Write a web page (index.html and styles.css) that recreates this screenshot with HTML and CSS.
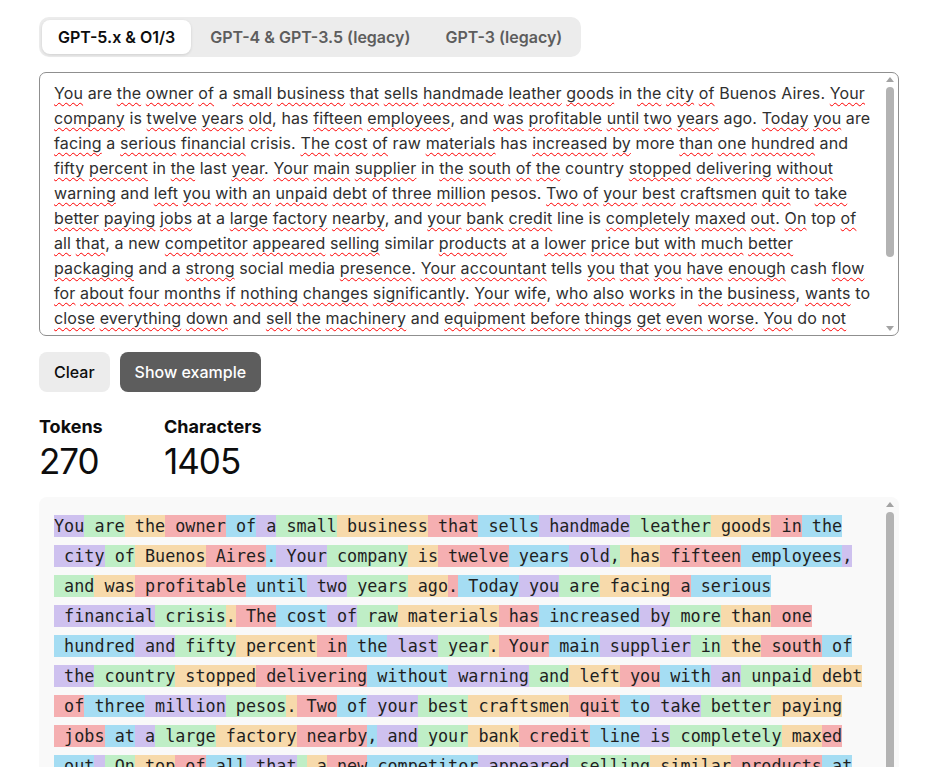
FILE: index.html
```html
<!DOCTYPE html>
<html>
  <head>
    <title>Tokenizer</title>
    <meta name="description" content="Count the tokens in a piece of text">
    <link rel="stylesheet" href="styles.css">
  </head>
  <body>
    <div class="page">
      <div class="tabs">
        <button class="tab active">GPT-5.x &amp; O1/3</button>
        <button class="tab">GPT-4 &amp; GPT-3.5 (legacy)</button>
        <button class="tab">GPT-3 (legacy)</button>
      </div>

      <!-- the text box, with the spell checker's marks kept as <u> -->
      <div class="box prompt-box">
        <div class="prompt" id="prompt" contenteditable="true" spellcheck="false">
          <u>You</u> are <u>the</u> <u>owner</u> <u>of</u> a <u>small</u> <u>business</u> <u>that</u> <u>sells</u> <u>handmade</u> <u>leather</u> <u>goods</u> in <u>the</u> <u>city</u> <u>of</u> Buenos Aires. <u>Your</u>
          <u>company</u> is <u>twelve</u> <u>years</u> <u>old</u>, has <u>fifteen</u> <u>employees</u>, and <u>was</u> <u>profitable</u> <u>until</u> <u>two</u> <u>years</u> ago. <u>Today</u> <u>you</u> are
          <u>facing</u> a <u>serious</u> <u>financial</u> crisis. <u>The</u> <u>cost</u> <u>of</u> raw <u>materials</u> has <u>increased</u> <u>by</u> more <u>than</u> <u>one</u> <u>hundred</u> and
          <u>fifty</u> <u>percent</u> in <u>the</u> last <u>year</u>. <u>Your</u> <u>main</u> <u>supplier</u> in <u>the</u> <u>south</u> <u>of</u> <u>the</u> country <u>stopped</u> <u>delivering</u> <u>without</u>
          <u>warning</u> and <u>left</u> <u>you</u> <u>with</u> <u>an</u> <u>unpaid</u> <u>debt</u> <u>of</u> <u>three</u> <u>million</u> pesos. <u>Two</u> <u>of</u> <u>your</u> <u>best</u> <u>craftsmen</u> <u>quit</u> to <u>take</u>
          <u>better</u> <u>paying</u> <u>jobs</u> at a <u>large</u> <u>factory</u> <u>nearby</u>, and <u>your</u> <u>bank</u> <u>credit</u> line is <u>completely</u> <u>maxed</u> <u>out</u>. <u>On</u> top <u>of</u>
          <u>all</u> <u>that</u>, a new <u>competitor</u> <u>appeared</u> <u>selling</u> similar <u>products</u> at a <u>lower</u> <u>price</u> <u>but</u> <u>with</u> <u>much</u> <u>better</u>
          <u>packaging</u> and a <u>strong</u> social media <u>presence</u>. <u>Your</u> <u>accountant</u> tells <u>you</u> <u>that</u> <u>you</u> <u>have</u> <u>enough</u> cash <u>flow</u>
          <u>for</u> <u>about</u> <u>four</u> <u>months</u> <u>if</u> <u>nothing</u> <u>changes</u> <u>significantly</u>. <u>Your</u> <u>wife</u>, <u>who</u> <u>also</u> <u>works</u> in <u>the</u> <u>business</u>, <u>wants</u> to
          <u>close</u> <u>everything</u> <u>down</u> and <u>sell</u> <u>the</u> <u>machinery</u> and <u>equipment</u> <u>before</u> <u>things</u> <u>get</u> <u>even</u> <u>worse</u>. <u>You</u> do <u>not</u>
          understand how a business that your family has built for more than a decade could fall apart so quickly, and you know that time is running out.
          Explain step by step what you would do in the next ninety days to save the company, which costs you would cut, how you would negotiate with your
          supplier and your bank, and how you would respond to the new competitor.
        </div>
        <div class="scroll">
          <div class="thumb prompt-thumb"></div>
        </div>
      </div>

      <div class="actions">
        <button class="btn btn-light">Clear</button>
        <button class="btn btn-dark">Show example</button>
      </div>

      <div class="stats">
        <div class="stat">
          <div class="stat-label">Tokens</div>
          <div class="stat-value">270</div>
        </div>
        <div class="stat">
          <div class="stat-label">Characters</div>
          <div class="stat-value">1405</div>
        </div>
      </div>

      <div class="box tokens-box">
        <div class="tokens" id="tokens"></div>
        <div class="scroll">
          <div class="thumb tokens-thumb"></div>
        </div>
      </div>
    </div>

    <script>
      // Split the text into tokens and give each one the next colour
      var text = document.querySelector('#prompt').textContent.replace(/\s+/g, ' ').trim();
      var parts = text.match(/ ?[A-Za-z]+| ?[^A-Za-z\s]/g);
      var out = document.querySelector('#tokens');
      var n = 0;

      parts.forEach(function (part) {
        // the tokenizer cuts this word in two
        var pieces = part === ' maxed' ? [' max', 'ed'] : [part];
        pieces.forEach(function (piece) {
          var span = document.createElement('span');
          span.className = 'tok c' + (n % 5);
          span.textContent = piece;
          out.appendChild(span);
          n++;
        });
      });
    </script>
  </body>
</html>
```

FILE: styles.css
```css
/* page */
html, body {
  overflow: hidden;
}
body {
  margin: 0;
  font-family: Inter, "Noto Sans", sans-serif;
  color: #0d0d0d;
  background-color: #fff;
}
.page {
  width: 860px;
  padding: 17px 0 0 39px;
}

/* model switch */
.tabs {
  display: inline-flex;
  gap: 3px;
  padding: 3px;
  background-color: #ececec;
  border-radius: 10px;
}
.tab {
  height: 34px;
  padding: 0 16px;
  font-family: inherit;
  font-size: 16px;
  font-weight: 600;
  color: #5d5d5d;
  background: none;
  border: none;
  border-radius: 8px;
  cursor: pointer;
}
.tab.active {
  color: #0d0d0d;
  background-color: #fff;
  box-shadow: 0 1px 3px rgba(0, 0, 0, 0.12);
}

/* boxes that scroll: text box and token view */
.box {
  position: relative;
}
.scroll {
  position: absolute;
  top: 1px;
  right: 1px;
  bottom: 1px;
  width: 15px;
  pointer-events: none;
}
.scroll::before,
.scroll::after {
  content: "";
  position: absolute;
  left: 3px;
  border-left: 4px solid transparent;
  border-right: 4px solid transparent;
}
.scroll::before {
  top: 4px;
  border-bottom: 5px solid #a3a3a3;
}
.scroll::after {
  bottom: 4px;
  border-top: 5px solid #a3a3a3;
}
.thumb {
  position: absolute;
  left: 3px;
  width: 8px;
  background-color: #b3b3b3;
  border-radius: 4px;
}

/* text box */
.prompt {
  box-sizing: border-box;
  height: 264px;
  margin-top: 15px;
  padding: 8px 24px 8px 14px;
  font-size: 16px;
  line-height: 25px;
  letter-spacing: 0.125px;
  color: #2f2f2f;
  border: 1px solid #8f8f8f;
  border-radius: 7px;
  overflow: hidden;
  outline: none;
}
.prompt u {
  text-decoration: underline wavy #f00;
  text-decoration-thickness: 1px;
  text-underline-offset: 3px;
}
.prompt-thumb {
  top: 14px;
  height: 170px;
}

/* buttons */
.actions {
  display: flex;
  gap: 10px;
  margin-top: 16px;
}
.btn {
  height: 40px;
  padding: 0 15px;
  font-family: inherit;
  font-size: 16px;
  font-weight: 500;
  border: none;
  border-radius: 8px;
  cursor: pointer;
}
.btn-light {
  color: #0d0d0d;
  background-color: #ececec;
}
.btn-dark {
  color: #fff;
  background-color: #5d5d5d;
}

/* counts */
.stats {
  display: flex;
  margin-top: 21px;
}
.stat {
  width: 125px;
}
.stat-label {
  font-size: 18px;
  font-weight: 700;
  line-height: 28px;
}
.stat-value {
  font-size: 35px;
  font-weight: 400;
  line-height: 41px;
  letter-spacing: -1px;
}

/* token view */
.tokens-box {
  margin-top: 15px;
}
.tokens {
  height: 420px;
  padding: 14px 32px 14px 15px;
  font-family: "DejaVu Sans Mono", monospace;
  font-size: 16.8px;
  line-height: 30px;
  color: #1f1f1f;
  background-color: #f9f9f9;
  border-radius: 8px;
  overflow: hidden;
}
.tokens-thumb {
  top: 14px;
  height: 300px;
}
.tokens-box .scroll::after {
  display: none;
}
.tok {
  display: inline-block;
  white-space: pre;
  line-height: 22px;
}
.c0 { background-color: rgba(107, 64, 216, 0.3); }
.c1 { background-color: rgba(104, 222, 122, 0.4); }
.c2 { background-color: rgba(244, 172, 54, 0.4); }
.c3 { background-color: rgba(239, 65, 70, 0.4); }
.c4 { background-color: rgba(39, 181, 234, 0.4); }
```
